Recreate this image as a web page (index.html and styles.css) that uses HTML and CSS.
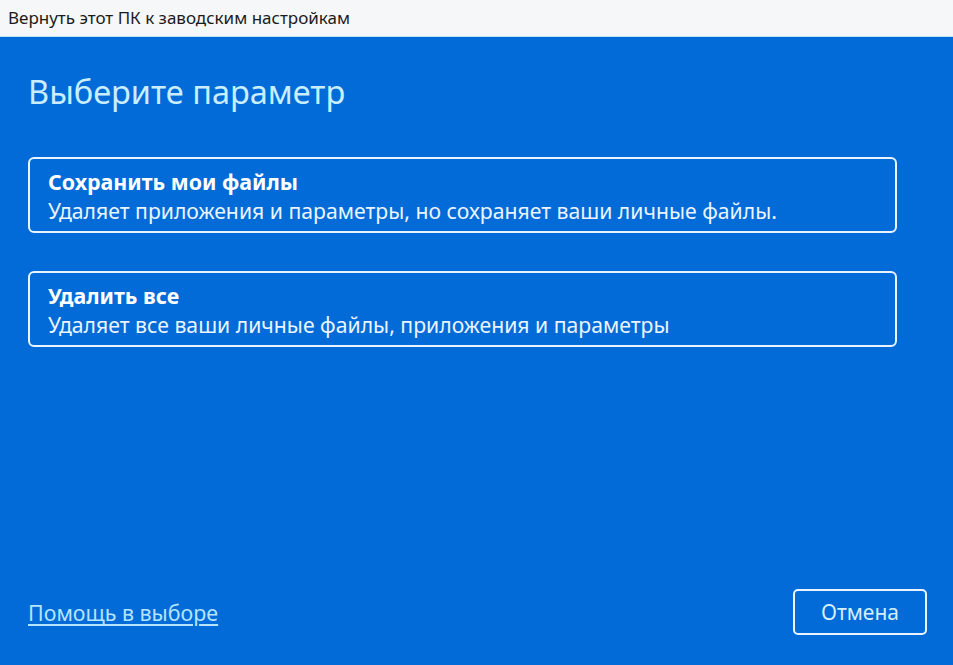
FILE: index.html
```html
<!DOCTYPE html>
<html lang="ru">
<head>
<meta charset="utf-8">
<title>Вернуть этот ПК к заводским настройкам</title>
<link rel="stylesheet" href="styles.css">
</head>
<body>
<div class="window">
  <div class="titlebar">Вернуть этот ПК к заводским настройкам</div>
  <main class="content">
    <h1 class="heading">Выберите параметр</h1>
    <div class="options">
      <button class="option">
        <span class="option-title">Сохранить мои файлы</span>
        <span class="option-desc">Удаляет приложения и параметры, но сохраняет ваши личные файлы.</span>
      </button>
      <button class="option">
        <span class="option-title">Удалить все</span>
        <span class="option-desc">Удаляет все ваши личные файлы, приложения и параметры</span>
      </button>
    </div>
    <div class="footer">
      <a class="help" href="#">Помощь в выборе</a>
      <button class="cancel">Отмена</button>
    </div>
  </main>
</div>
</body>
</html>
```
FILE: styles.css
```css
* { box-sizing: border-box; }
html, body { margin: 0; padding: 0; height: 100%; }
body {
  font-family: "Noto Sans", "Open Sans", sans-serif;
  background: #026bd8;
}
.window {
  display: flex;
  flex-direction: column;
  height: 665px;
}
.titlebar {
  height: 37px;
  background: #f6f7f8;
  border-bottom: 1px solid #bfe4f2;
  color: #1b1b1b;
  font-size: 17px;
  line-height: 35px;
  padding-left: 8px;
  white-space: nowrap;
}
.content {
  flex: 1;
  display: flex;
  flex-direction: column;
  background: #026bd8;
  padding: 0 26px 30px 28px;
}
.heading {
  margin: 33px 0 0 0;
  font-size: 32.5px;
  font-weight: 400;
  line-height: 44px;
  color: #c9eeff;
}
.options {
  display: flex;
  flex-direction: column;
  gap: 38px;
  margin-top: 43px;
  margin-right: 30px;
}
.option {
  display: flex;
  flex-direction: column;
  align-items: flex-start;
  height: 76px;
  padding: 9px 18px 0 18px;
  background: transparent;
  border: 2px solid #e9f4ff;
  border-radius: 6px;
  font-family: inherit;
  text-align: left;
  color: #ffffff;
}
.option-title {
  font-size: 21.4px;
  font-weight: 700;
  line-height: 28px;
  color: #ffffff;
  white-space: nowrap;
}
.option-desc {
  font-size: 21.2px;
  line-height: 29px;
  color: #eaf4ff;
  white-space: nowrap;
}
.footer {
  margin-top: auto;
  display: flex;
  align-items: center;
  justify-content: space-between;
}
.help {
  font-size: 21.4px;
  color: #b4e4ff;
  text-decoration: underline;
  text-underline-offset: 3px;
}
.cancel {
  width: 134px;
  height: 46px;
  background: transparent;
  border: 2px solid #e9f4ff;
  border-radius: 5px;
  font-family: inherit;
  font-size: 21px;
  color: #d4f0ff;
}
```
